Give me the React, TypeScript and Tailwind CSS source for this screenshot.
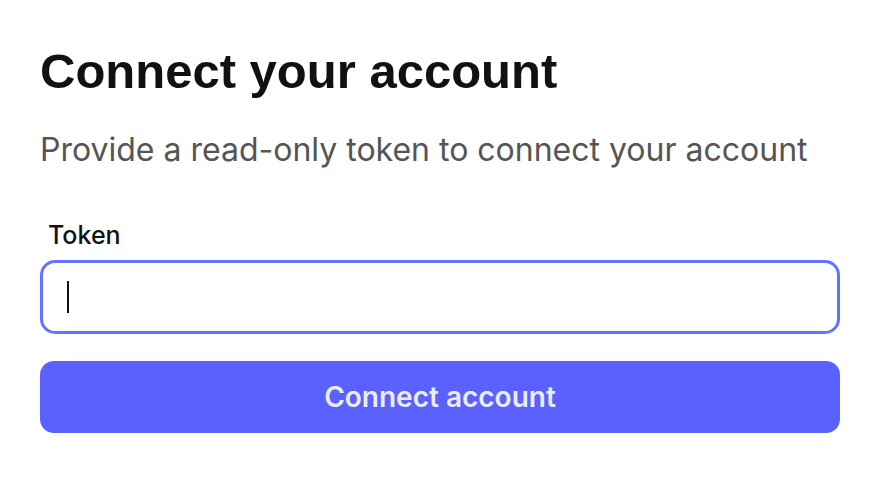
import React from 'react';

const App: React.FC = () => {
  return (
    <div className="min-h-screen bg-white px-10 pt-[42px]" style={{ fontFamily: 'Inter, "Noto Sans", sans-serif' }}>
      <h1 className="text-[49px] font-bold leading-[58px] text-[#111111]" style={{ fontFamily: '"Liberation Sans", Arial, sans-serif' }}>
        Connect your account
      </h1>
      <p className="mt-[30px] text-[32px] leading-[40px] text-[#555555]">
        Provide a read-only token to connect your account
      </p>
      <label className="mt-[50px] block pl-2 text-[25px] leading-[30px] font-medium text-[#111111]">Token</label>
      <div className="mt-[10px] flex h-[74px] w-[800px] items-center rounded-[15px] border-[3px] border-[#6571ff] pl-[24px]">
        <span className="block h-[32px] w-[2px] bg-[#111111]" />
      </div>
      <button className="mt-[27px] flex h-[72px] w-[800px] items-center justify-center rounded-[14px] bg-[#5a61ff] text-[28px] font-semibold text-[#ececf6]">
        Connect account
      </button>
    </div>
  );
};

export default App;
